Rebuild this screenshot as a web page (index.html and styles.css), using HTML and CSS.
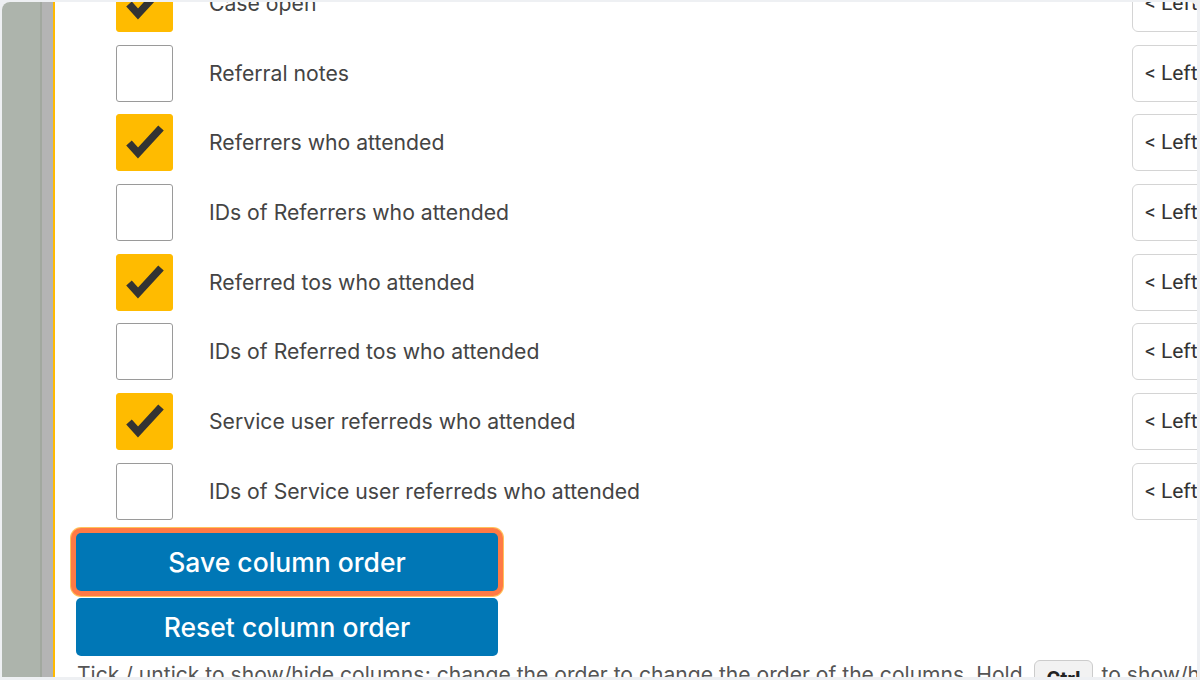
FILE: index.html
```html
<!DOCTYPE html>
<html>
<head>
<meta charset="utf-8">
<link rel="stylesheet" href="styles.css">
</head>
<body>
<div class="frame">
  <div class="side-a"></div>
  <div class="side-b"></div>
  <div class="main">
    <div class="list">
      <div class="row"><span class="cb on"><svg viewBox="0 0 57 57"><polyline points="13,29 22,39 45,14"/></svg></span><span class="label">Case open</span><span class="sel">&lt; Left</span></div>
      <div class="row"><span class="cb"></span><span class="label">Referral notes</span><span class="sel">&lt; Left</span></div>
      <div class="row"><span class="cb on"><svg viewBox="0 0 57 57"><polyline points="13,29 22,39 45,14"/></svg></span><span class="label">Referrers who attended</span><span class="sel">&lt; Left</span></div>
      <div class="row"><span class="cb"></span><span class="label">IDs of Referrers who attended</span><span class="sel">&lt; Left</span></div>
      <div class="row"><span class="cb on"><svg viewBox="0 0 57 57"><polyline points="13,29 22,39 45,14"/></svg></span><span class="label">Referred tos who attended</span><span class="sel">&lt; Left</span></div>
      <div class="row"><span class="cb"></span><span class="label">IDs of Referred tos who attended</span><span class="sel">&lt; Left</span></div>
      <div class="row"><span class="cb on"><svg viewBox="0 0 57 57"><polyline points="13,29 22,39 45,14"/></svg></span><span class="label">Service user referreds who attended</span><span class="sel">&lt; Left</span></div>
      <div class="row"><span class="cb"></span><span class="label">IDs of Service user referreds who attended</span><span class="sel">&lt; Left</span></div>
    </div>
    <div class="buttons">
      <button class="btn focus">Save column order</button>
      <button class="btn">Reset column order</button>
    </div>
    <p class="help">Tick / untick to show/hide columns; change the order to change the order of the columns. Hold <kbd>Ctrl</kbd> to show/hide all columns.</p>
  </div>
</div>
</body>
</html>
```

FILE: styles.css
```css
html, body {
  margin: 0;
  padding: 0;
  background: #eef0f3;
  width: 1200px;
  height: 680px;
  overflow: hidden;
}
.frame {
  margin: 2px 3px 0 2px;
  height: 675px;
  display: flex;
  overflow: hidden;
  border-radius: 8px 8px 0 0;
  background: #fff;
}
.side-a {
  width: 38px;
  flex: none;
  background: #adb4ac;
  border-right: 2px solid #a2a89f;
}
.side-b {
  width: 11px;
  flex: none;
  background: #b4b4b4;
  border-right: 2px solid #ffb900;
}
.main {
  flex: 1;
  min-width: 0;
  font-family: Inter, "Open Sans", sans-serif;
  overflow: hidden;
}
.list {
  margin-top: -27px;
  display: grid;
  grid-auto-rows: 69.67px;
}
.row {
  display: flex;
  align-items: flex-start;
  white-space: nowrap;
}
.cb {
  flex: none;
  width: 55px;
  height: 55px;
  margin-left: 61px;
  border: 1px solid #9a9a9a;
  border-radius: 3px;
  background: #fff;
  box-sizing: content-box;
}
.cb.on {
  background: #ffbb00;
  border-color: #ffbb00;
}
.cb svg {
  display: block;
  width: 57px;
  height: 57px;
  margin: -1px;
}
.cb polyline {
  fill: none;
  stroke: #333;
  stroke-width: 7.5;
  stroke-linejoin: miter;
  stroke-linecap: butt;
}
.label {
  margin-left: 36px;
  line-height: 57px;
  font-size: 21.2px;
  color: #444;
  flex: 1;
}
.sel {
  flex: none;
  width: 120px;
  height: 55px;
  margin-right: -69px;
  border: 1px solid #d4d4d4;
  border-radius: 6px;
  box-sizing: content-box;
  padding-left: 12px;
  line-height: 55px;
  font-family: Roboto, "Liberation Sans", sans-serif;
  font-size: 21px;
  color: #333;
}
.buttons {
  margin: 1px 0 0 21px;
  display: flex;
  flex-direction: column;
  gap: 7px;
  align-items: flex-start;
}
.btn {
  width: 422px;
  height: 58px;
  border: none;
  border-radius: 5px;
  background: #0077b6;
  color: #fff;
  font-family: Inter, "Open Sans", sans-serif;
  font-size: 26.5px;
  font-weight: 500;
  padding: 0;
}
.btn.focus {
  box-shadow: 0 0 0 5px #ff7a45, 0 0 0 6px #ffc25a;
}
.help {
  margin: 4px 0 0 22px;
  font-size: 21.1px;
  color: #555;
  white-space: nowrap;
  line-height: 30px;
}
kbd {
  display: inline-block;
  font-family: Roboto, "Liberation Sans", sans-serif;
  font-weight: 700;
  font-size: 21px;
  color: #222;
  background: #f2f2f2;
  border: 1px solid #ccc;
  border-radius: 6px;
  padding: 4px 11px;
  margin: 0 3px 0 6px;
  line-height: 28px;
  vertical-align: -4px;
}
```
